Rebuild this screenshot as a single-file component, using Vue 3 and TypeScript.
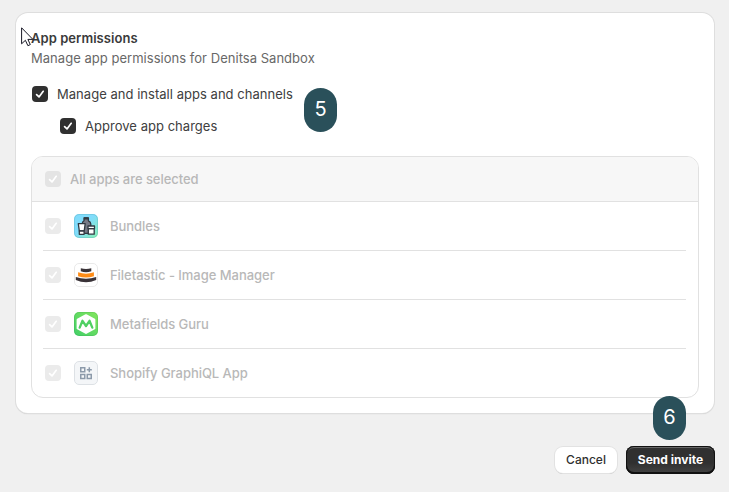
<script setup lang="ts">
interface AppEntry {
  id: 'bundles' | 'filetastic' | 'metafields' | 'graphiql'
  name: string
}

const apps: AppEntry[] = [
  { id: 'bundles', name: 'Bundles' },
  { id: 'filetastic', name: 'Filetastic - Image Manager' },
  { id: 'metafields', name: 'Metafields Guru' },
  { id: 'graphiql', name: 'Shopify GraphiQL App' },
]
</script>

<template>
  <main class="page">
    <section class="card">
      <h2 class="title">App permissions</h2>
      <p class="subtitle">Manage app permissions for Denitsa Sandbox</p>

      <div class="option">
        <span class="check">
          <svg viewBox="0 0 16 16"><path d="M4.6 8.6 7 10.9 11.2 5.3" /></svg>
        </span>
        <span>Manage and install apps and channels</span>
      </div>
      <div class="option nested">
        <span class="check">
          <svg viewBox="0 0 16 16"><path d="M4.6 8.6 7 10.9 11.2 5.3" /></svg>
        </span>
        <span>Approve app charges</span>
      </div>

      <div class="list">
        <div class="list-head">
          <span class="check off">
            <svg viewBox="0 0 16 16"><path d="M4.6 8.6 7 10.9 11.2 5.3" /></svg>
          </span>
          <span>All apps are selected</span>
        </div>
        <div v-for="app in apps" :key="app.id" class="row">
          <span class="check off">
            <svg viewBox="0 0 16 16"><path d="M4.6 8.6 7 10.9 11.2 5.3" /></svg>
          </span>
          <svg v-if="app.id === 'bundles'" class="app-icon" viewBox="0 0 24 24">
            <defs>
              <linearGradient id="bundle-bg" x1="0" y1="0" x2="1" y2="1">
                <stop offset=".45" stop-color="#81dcfb" />
                <stop offset="1" stop-color="#87f2b2" />
              </linearGradient>
            </defs>
            <rect width="24" height="24" rx="5" fill="url(#bundle-bg)" />
            <rect x=".5" y=".5" width="23" height="23" rx="4.5" fill="none" stroke="#4b99a5" stroke-opacity=".25" />
            <g stroke="#303941" stroke-width="1.3" stroke-linejoin="round">
              <path d="M10 4h4.4v2.8c1.6.7 2.4 1.6 2.4 3.2v9.4H8.2V10c0-1.600.6-2.500 1.800-3.200z" fill="#767985" />
              <path d="M9.900 4.400h4.600" stroke-width="2.200" />
              <path d="M4.300 9.700h6.900l-1 7.100H5.300z" fill="#fff" />
              <path d="M5.300 17h4.800v3.300H5.300z" fill="#fff" />
              <path d="M14.300 14.600h5.900v5.600h-5.900z" fill="#fff" />
              <path d="M14 12h6.500v2.600H14z" fill="#fff" />
            </g>
          </svg>
          <svg v-else-if="app.id === 'filetastic'" class="app-icon" viewBox="0 0 24 24">
            <rect x=".5" y=".5" width="23" height="23" rx="4.500" fill="#fff" stroke="#e9e9e9" />
            <path d="M6.800 5.300Q12 6.700 17.300 5.300v3Q12 10.400 6.800 8.300z" fill="#3a3338" />
            <path d="M4.100 9.300Q12 12 19.900 9.300v3.900Q12 16 4.100 13.200z" fill="#ff8c16" />
            <path d="M1.800 14Q12 17.300 22.200 14v3Q12 21.600 1.800 17z" fill="#3a3338" />
          </svg>
          <svg v-else-if="app.id === 'metafields'" class="app-icon" viewBox="0 0 24 24">
            <defs>
              <linearGradient id="meta-bg" x1="0" y1="1" x2="1" y2="0">
                <stop stop-color="#42cf68" />
                <stop offset="1" stop-color="#83e65d" />
              </linearGradient>
            </defs>
            <rect width="24" height="24" rx="5" fill="url(#meta-bg)" />
            <rect x=".5" y=".5" width="23" height="23" rx="4.500" fill="none" stroke="#278e48" stroke-opacity=".18" />
            <path d="m12 3.300 8.300 4.500v8.600L12 20.900l-8.300-4.500V7.800z" fill="#fff" stroke="#fff" stroke-width="2.200" stroke-linejoin="round" />
            <path d="M5.700 15.600 8.500 8.800 12 14l3.500-5.200 2.800 6.800" fill="none" stroke="#4fd063" stroke-width="2.300" stroke-linejoin="round" stroke-linecap="round" />
          </svg>
          <svg v-else class="app-icon" viewBox="0 0 24 24">
            <rect x=".5" y=".5" width="23" height="23" rx="4.500" fill="#f4f6f8" stroke="#dde1e5" />
            <g fill="none" stroke="#8c9aaa" stroke-width="1.500">
              <rect x="6.750" y="6.750" width="4" height="4" />
              <rect x="6.750" y="13.500" width="4" height="4" />
              <rect x="13.250" y="13.500" width="4" height="4" />
              <path d="M15.300 6.200v5M12.800 8.700h5" />
            </g>
          </svg>
          <span>{{ app.name }}</span>
        </div>
      </div>
    </section>

    <footer class="actions">
      <button type="button" class="btn cancel">Cancel</button>
      <button type="button" class="btn send">Send invite</button>
    </footer>

    <span class="marker five">5</span>
    <span class="marker six">6</span>
    <svg class="cursor" viewBox="0 0 13 20">
      <path d="M.6.8v16l3.800-3.500 2.500 5.400 2.400-1.100-2.400-5.200h5z" fill="#fff" stroke="#171724" stroke-width="1" />
    </svg>
  </main>
</template>

<style>
body {
  background: #f0f0f0;
}
</style>

<style scoped>
.page {
  box-sizing: border-box;
  position: relative;
  height: 492px;
  padding: 13px 15px 0 16px;
  overflow: hidden;
  background: #f0f0f0;
  color: #303030;
  font: 13px/20px Inter, "Liberation Sans", sans-serif;
}
.card {
  box-sizing: border-box;
  height: 400px;
  padding: 15px;
  border-radius: 12px;
  background: #fff;
  box-shadow: 0 0 0 1px #dedede, 0 1px 1px #c4c4c4;
}
.title,
.subtitle {
  margin: 0;
  font-size: 13px;
  line-height: 20px;
}
.title {
  color: #3a3a3a;
  font-weight: 600;
  letter-spacing: 0.05px;
}
.subtitle {
  color: #686868;
  letter-spacing: 0.03px;
}
.option {
  display: flex;
  align-items: center;
  gap: 9px;
  height: 20px;
  margin-top: 16px;
  padding-left: 1px;
  color: #404040;
  letter-spacing: 0.03px;
}
.nested {
  margin-top: 12px;
  padding-left: 29px;
}
.check {
  flex: none;
  width: 16px;
  height: 16px;
  border-radius: 4px;
  background: #303030;
}
.check svg {
  display: block;
  fill: none;
  stroke: #fff;
  stroke-width: 1.7;
  stroke-linecap: round;
  stroke-linejoin: round;
}
.check.off {
  background: #ebebeb;
}
.list {
  box-sizing: border-box;
  height: 242px;
  margin-top: 20px;
  border: 1px solid #e1e1e1;
  border-radius: 12px;
  overflow: hidden;
  color: #b8b8b8;
  font-weight: 500;
  letter-spacing: -0.04px;
}
.list-head {
  display: flex;
  align-items: center;
  gap: 9px;
  height: 44px;
  padding-left: 13px;
  border-bottom: 1px solid #e1e1e1;
  background: #f7f7f7;
}
.list-head .check {
  background: #e4e4e4;
}
.row {
  display: flex;
  align-items: center;
  height: 48px;
  margin: 0 12px 0 11px;
  padding-left: 2px;
  border-bottom: 1px solid #e1e1e1;
}
.row:last-child {
  border-bottom: 0;
}
.app-icon {
  flex: none;
  width: 24px;
  height: 24px;
  margin: 0 12px 0 13px;
}
.actions {
  display: flex;
  justify-content: flex-end;
  gap: 9px;
  margin: 33px -1px 0 0;
}
.btn {
  box-sizing: border-box;
  height: 28px;
  padding: 0;
  border: 0;
  border-radius: 8px;
  font: 500 12px/16px Inter, "Liberation Sans", sans-serif;
}
.cancel {
  width: 62px;
  height: 26px;
  margin-top: 1px;
  background: #fff;
  color: #303030;
  box-shadow: 0 0 0 1px #e2e2e2, 0 1px 0 #bdbdbd;
}
.send {
  width: 89px;
  background: linear-gradient(#303030 60%, #444);
  color: #fff;
  font-weight: 700;
  box-shadow: inset 0 0 0 1px #111, inset 0 2px 0 #666, inset 0 -1px 0 1px #111;
}
.marker {
  position: absolute;
  width: 33px;
  height: 44px;
  border-radius: 16.5px;
  background: #2a505a;
  color: #fff;
  font: 20px/42px Inter, "Liberation Sans", sans-serif;
  text-align: center;
}
.five {
  top: 88px;
  left: 304px;
}
.six {
  top: 396px;
  left: 653px;
}
.cursor {
  position: absolute;
  top: 27px;
  left: 21px;
  width: 13px;
  height: 20px;
}
</style>
